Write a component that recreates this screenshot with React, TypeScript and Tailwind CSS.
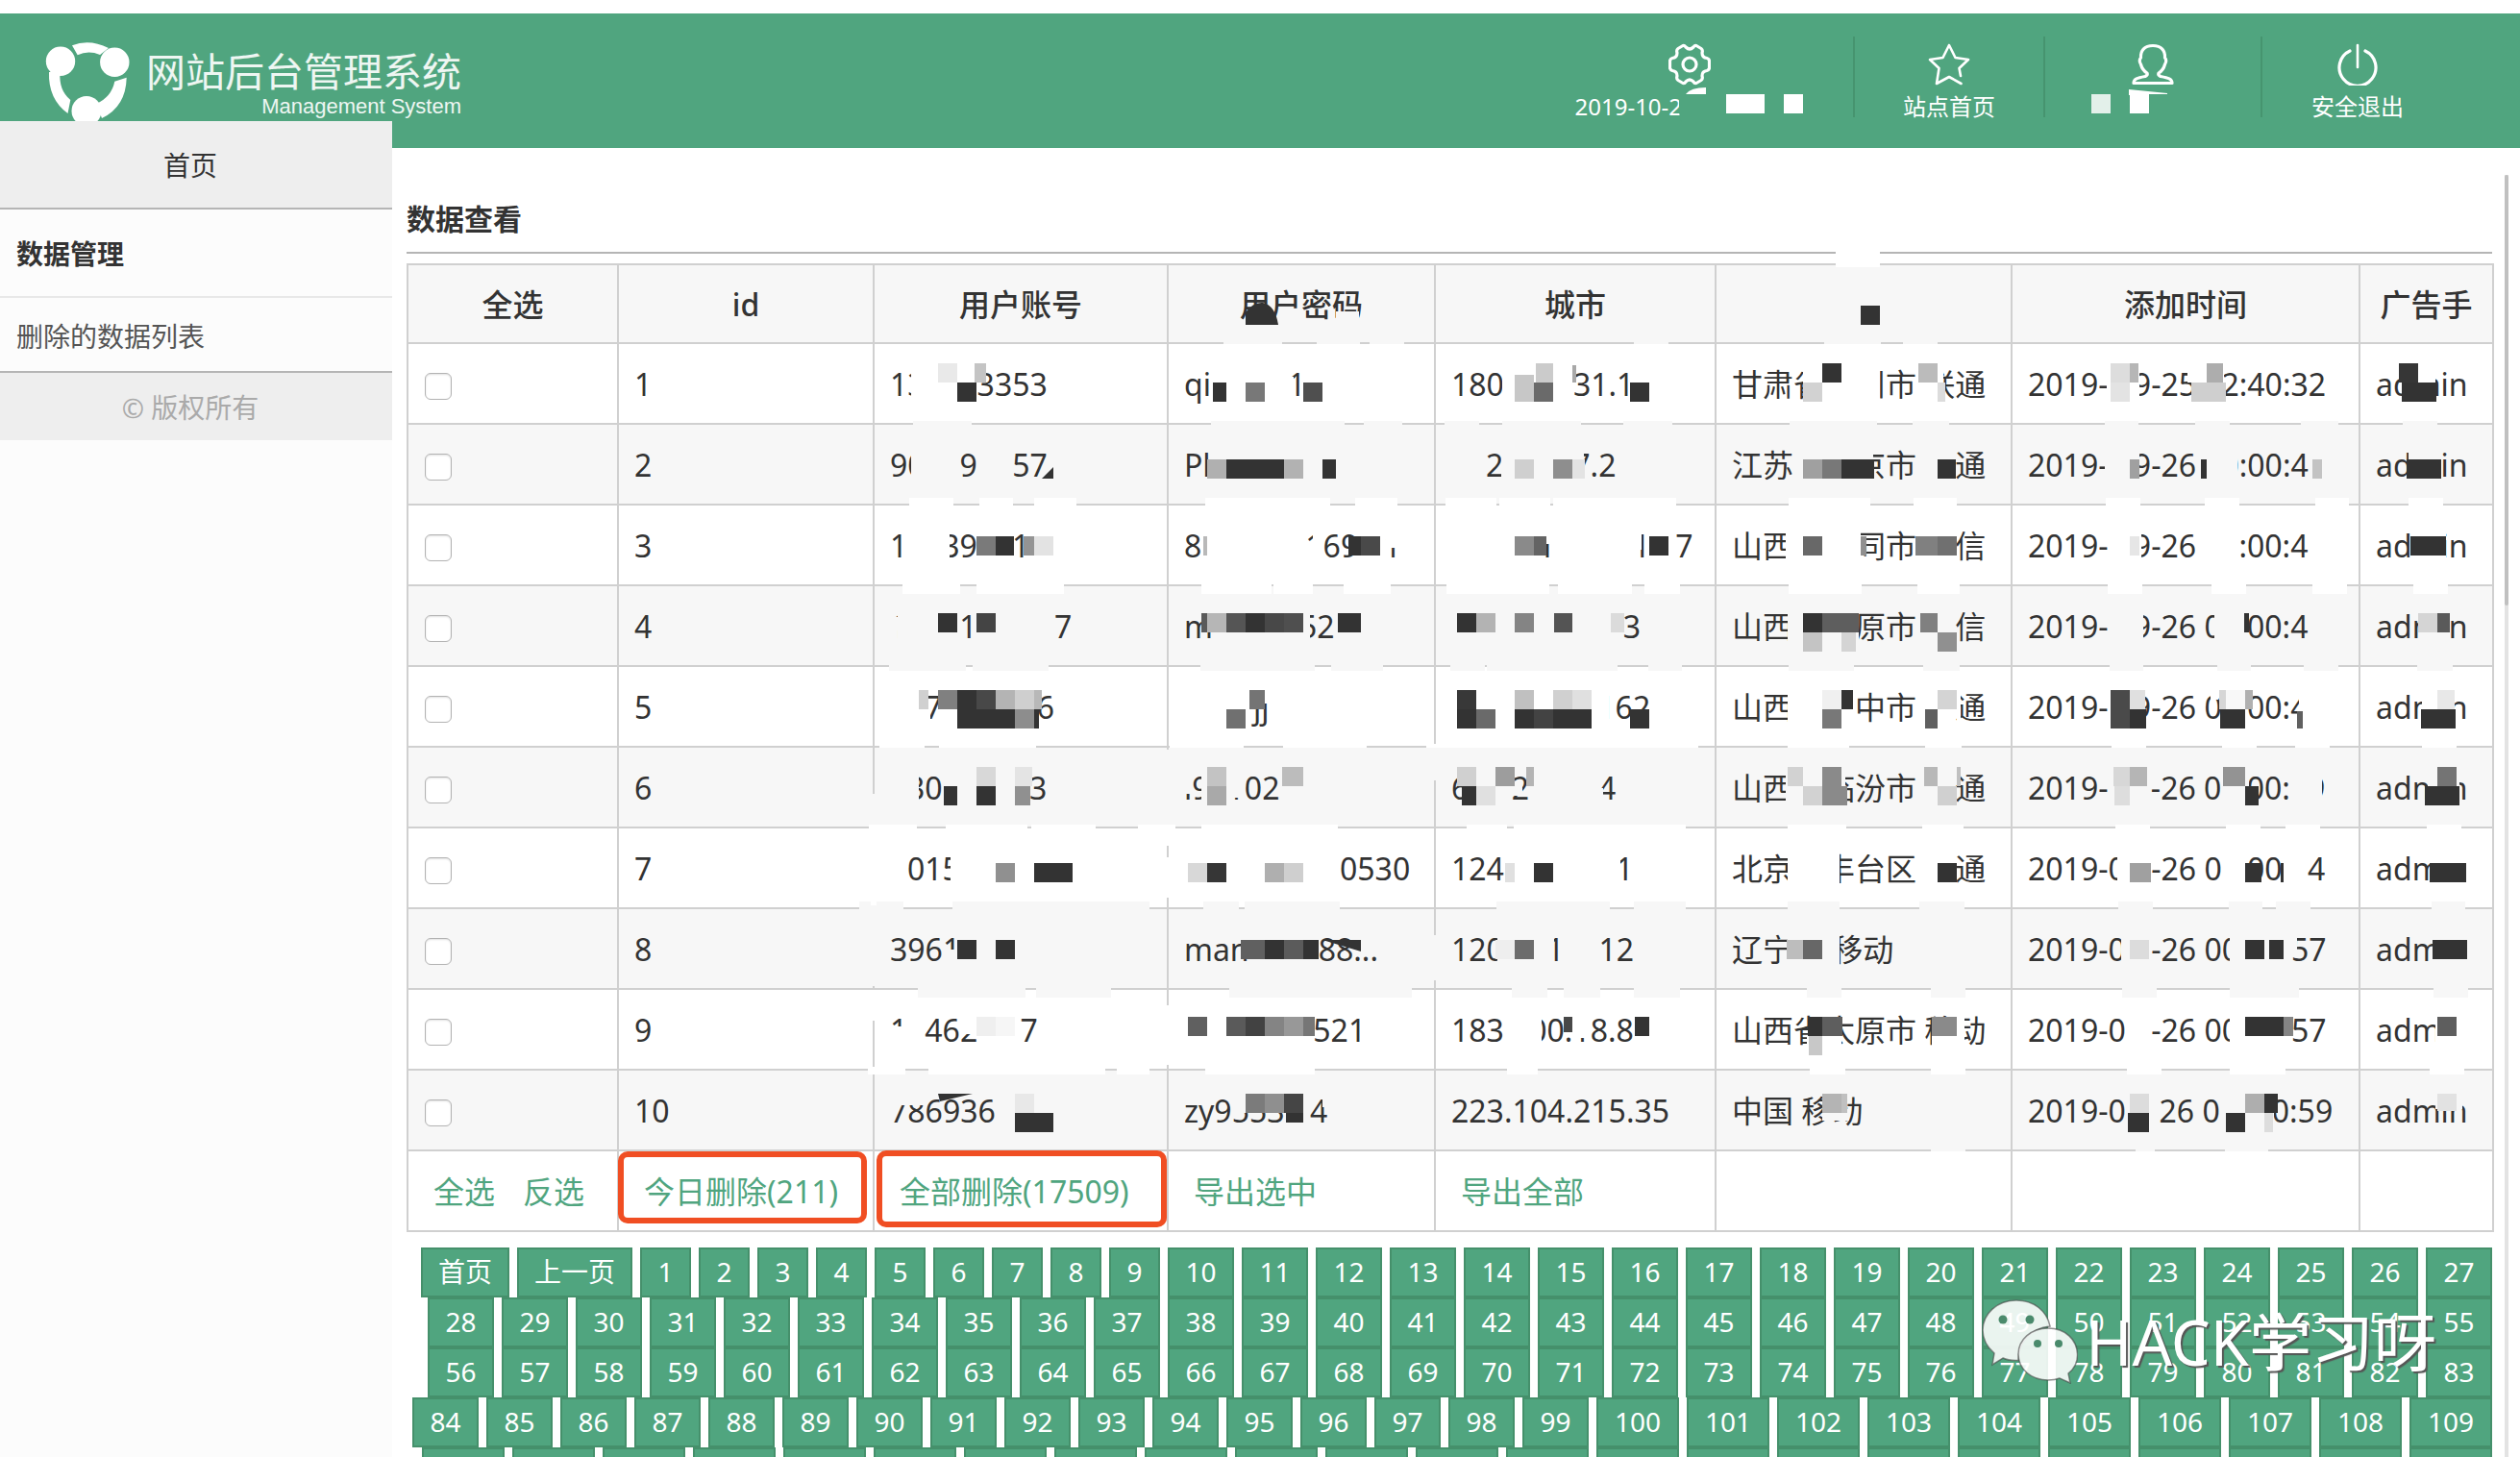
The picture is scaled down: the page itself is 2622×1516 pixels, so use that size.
import React from "react";

type Patch = [x: number, y: number, w: number, h: number, fill: string];

const W = "#ffffff";
const G = "#f7f7f7";
const D = "#333333";

const columns = [
  { title: "全选", width: "w-[219px]" },
  { title: "id", width: "w-[266px]" },
  { title: "用户账号", width: "w-[306px]" },
  { title: "用户密码", width: "w-[278px]" },
  { title: "城市", width: "w-[292px]" },
  { title: "", width: "w-[308px]" },
  { title: "添加时间", width: "w-[362px]" },
  { title: "广告手", width: "w-[139px]" },
];

// "_" stands for one redacted digit.
const rows: string[][] = [
  ["13___3353", "qi____ 1", "180____31.1", "甘肃省　州市 联通", "2019- _9-25 _2:40:32"],
  ["90__9_157", "Pl", "__2____7.2", "江苏　　京市 联通", "2019- _9-26 _0:00:4"],
  ["1__39__1", "8______169_ 1", "_____1____ 1_ 7", "山西　　同市 　信", "2019- _9-26 __:00:4"],
  ["1___1____ 7", "m_____52", "_________  3", "山西　　原市 　信", "2019- _9-26 0_ 00:4"],
  ["__7_____ 6", "____jj", "________ 162", "山西　　中市 　通", "2019- _9-26 0_ 00:4"],
  ["_30____13", "l9_102", "6__ 2____4", "山西　临汾市 　通", "2019- __-26 0_ 00:_9"],
  ["_015", "_________0530", "124______ 1", "北京　丰台区 　通", "2019-0_ -26 0_ 00_ 4"],
  ["3961", "man____88...", "120__ 1__12", "辽宁　 移动", "2019-0_ -26 00___57"],
  ["1_462__ 7", "_______ 521", "183_ 00.18.8", "山西省太原市 移动", "2019-0_ -26 00___57"],
  ["786936", "zy9553_ 4", "223.104.215.35", "中国 移动", "2019-0_  26 0___0:59"],
];

// Horizontal spans [from, to] wiped out of the rule under each row.
const ruleGaps: { y: number; h: number; fill: string; spans: [number, number][] }[] = [
  { y: 354, h: 4, fill: G, spans: [[1273, 1334], [1370, 1415], [1425, 1461], [1700, 1736], [1898, 1957], [1980, 2016]] },
  { y: 438, h: 4, fill: G, spans: [[950, 1011], [1260, 1399], [1419, 1459], [1503, 1539], [1563, 1645], [1689, 1740], [1862, 1953], [1990, 2028], [2190, 2225], [2284, 2320], [2394, 2433], [2500, 2536]] },
  { y: 518, h: 8, fill: W, spans: [[946, 992], [1019, 1054], [1076, 1120], [1254, 1384], [1410, 1454], [1504, 1557], [1560, 1613], [1616, 1744], [1861, 1946], [1991, 2036], [2191, 2227], [2294, 2330], [2409, 2444], [2506, 2542]] },
  { y: 606, h: 12, fill: W, spans: [[939, 999], [1016, 1107], [1250, 1323], [1325, 1366], [1398, 1447], [1505, 1612], [1621, 1698], [1711, 1748], [1861, 1937], [1995, 2039], [2193, 2229], [2301, 2337], [2406, 2442], [2511, 2547]] },
  { y: 690, h: 8, fill: G, spans: [[925, 1005], [1012, 1091], [1249, 1368], [1385, 1439], [1509, 1545], [1547, 1683], [1715, 1750], [1861, 1929], [2001, 2039], [2195, 2230], [2307, 2342], [2397, 2433], [2515, 2552]] },
  { y: 774, h: 4, fill: W, spans: [[915, 962], [977, 1078], [1217, 1294], [1335, 1422], [1484, 1767], [1860, 1924], [2003, 2041], [2197, 2233], [2312, 2348], [2388, 2424], [2520, 2556]] },
  { y: 858, h: 4, fill: W, spans: [[904, 954], [984, 1069], [1073, 1140], [1184, 1223], [1250, 1392], [1526, 1568], [1575, 1754], [1860, 1921], [2000, 2043], [2201, 2237], [2316, 2352], [2378, 2414], [2525, 2561]] },
  { y: 938, h: 8, fill: G, spans: [[894, 940], [991, 1196], [1252, 1289], [1295, 1394], [1557, 1675], [1700, 1754], [1860, 1914], [1997, 2044], [2204, 2240], [2319, 2354], [2368, 2404], [2530, 2565]] },
  { y: 1026, h: 12, fill: G, spans: [[955, 1067], [1078, 1156], [1279, 1469], [1573, 1610], [1627, 1665], [1700, 1748], [1880, 1916], [2009, 2045], [2208, 2244], [2320, 2392], [2532, 2568]] },
  { y: 1110, h: 8, fill: W, spans: [[903, 942], [966, 1150], [1162, 1196], [1254, 1368], [1568, 1600], [1883, 1920], [2009, 2045], [2213, 2249], [2320, 2378], [2528, 2564]] },
  { y: 1196, h: 2, fill: G, spans: [[2009, 2045], [2222, 2242], [2315, 2360]] },
];

const wipes: Patch[] = [
  // column rules
  [1910, 262, 46, 16, W],
  [906, 826, 6, 32, G], [906, 862, 6, 80, W], [906, 946, 6, 80, G], [906, 1030, 6, 32, W],
  [1212, 780, 6, 78, G], [1212, 862, 6, 18, W], [1212, 892, 6, 42, W], [1212, 1046, 6, 62, W],
  [1490, 778, 6, 34, G], [1490, 973, 6, 47, G],
  // header
  [1390, 324, 24, 18, G],
  // account
  [948, 378, 28, 42, W], [948, 460, 34, 44, G], [1034, 460, 19, 44, G],
  [976, 546, 12, 44, W], [927, 642, 14, 14, G], [934, 636, 12, 40, G],
  [956, 734, 12, 30, W], [940, 800, 16, 44, G], [1050, 800, 20, 34, G],
  [989, 880, 12, 50, W], [982, 988, 14, 24, G], [926, 1068, 14, 24, W],
  [998, 1054, 20, 22, W], [926, 1136, 38, 14, G],
  // password
  [1338, 392, 8, 40, W], [1366, 554, 8, 30, W], [1442, 550, 20, 20, W],
  [1349, 634, 14, 44, G], [1302, 716, 20, 16, W], [1232, 800, 7, 26, G], [1250, 800, 7, 44, G], [1276, 800, 16, 30, G],
  [1376, 1136, 10, 16, G], [1282, 1138, 14, 20, G], [1300, 1158, 10, 6, G], [1320, 1158, 10, 4, G], [1353, 1136, 13, 16, G],
  // address
  [1563, 378, 12, 44, W], [1562, 460, 12, 44, G], [1636, 470, 12, 30, G],
  [1598, 546, 16, 20, W], [1700, 546, 8, 26, W], [1676, 660, 12, 22, G],
  [1664, 720, 10, 28, W], [1716, 720, 6, 44, W], [1574, 818, 10, 10, G],
  [1662, 820, 6, 16, G], [1680, 880, 6, 40, W], [1558, 966, 14, 44, G],
  [1610, 970, 7, 30, G], [1590, 1054, 14, 44, W], [1636, 1054, 14, 26, W],
  // region
  [1876, 378, 20, 44, W], [1896, 398, 60, 24, W], [1916, 376, 40, 26, W],
  [1996, 376, 26, 46, W], [1925, 460, 24, 44, G], [1998, 460, 37, 44, G],
  [1858, 546, 16, 44, W], [1928, 546, 8, 44, W], [1860, 630, 16, 44, G], [1928, 658, 6, 20, G],
  [1860, 714, 16, 44, W], [1858, 798, 20, 44, G], [1898, 798, 22, 44, G],
  [1860, 880, 54, 44, W], [1998, 880, 37, 44, W], [2036, 720, 4, 40, W], [1860, 970, 54, 44, G], [1880, 1078, 36, 24, W],
  [2010, 1078, 34, 24, W], [2034, 1056, 10, 44, W], [1896, 1136, 22, 30, G], [1914, 1156, 10, 10, G],
  // time
  [2192, 376, 34, 44, W], [2276, 376, 20, 22, W], [2306, 376, 8, 22, W],
  [2190, 460, 36, 44, G], [2296, 460, 32, 44, G], [2418, 460, 10, 44, G],
  [2196, 546, 32, 44, W], [2196, 630, 34, 44, G], [2304, 630, 30, 44, G], [2416, 630, 10, 44, G],
  [2300, 718, 8, 10, W], [2392, 716, 30, 24, W], [2396, 730, 30, 34, W],
  [2314, 798, 26, 44, G], [2390, 800, 26, 44, G], [2203, 880, 14, 44, W],
  [2318, 880, 18, 44, W], [2207, 966, 12, 44, G], [2320, 966, 16, 44, G], [2384, 966, 6, 30, G],
  [2211, 1050, 12, 44, W], [2320, 1050, 16, 44, W], [2214, 1136, 22, 44, G], [2316, 1136, 50, 44, G],
  // advertiser
  [2514, 376, 20, 22, W], [2500, 398, 34, 22, W],
  [2506, 460, 34, 44, G], [2510, 546, 35, 44, W], [2516, 630, 34, 44, G],
  [2520, 714, 34, 44, W], [2526, 798, 33, 44, G], [2532, 880, 36, 44, W],
  [2533, 966, 38, 44, G], [2534, 1050, 36, 44, W], [2534, 1136, 28, 18, G],
];

const blocks: Patch[] = [
  [1936, 318, 20, 20, D],
  // account
  [976, 378, 20, 20, "#e9e9e9"], [996, 398, 20, 20, D], [1014, 378, 12, 20, "#c4c4c4"],
  [1016, 558, 20, 20, "#7a7a7a"], [1036, 558, 19, 20, D], [1065, 558, 11, 20, "#949494"], [1076, 558, 20, 20, "#e3e3e3"],
  [976, 638, 20, 20, D], [1016, 638, 20, 20, "#444444"],
  [956, 718, 10, 20, "#d0d0d0"], [976, 718, 20, 20, "#808080"], [996, 718, 20, 20, D], [1016, 718, 20, 20, "#484848"],
  [1036, 718, 20, 20, "#b4b4b4"], [1056, 718, 20, 20, "#cfcfcf"], [1076, 718, 8, 20, "#b8b8b8"],
  [996, 738, 60, 20, D], [1056, 738, 20, 20, "#8d8d8d"], [1076, 738, 5, 20, D],
  [982, 818, 14, 20, D], [1016, 798, 20, 20, "#d8d8d8"], [1016, 818, 20, 20, D], [1056, 798, 18, 20, "#e4e4e4"], [1056, 818, 16, 20, "#909090"],
  [1036, 898, 20, 20, "#909090"], [1076, 898, 40, 20, D],
  [996, 978, 20, 20, D], [1036, 978, 20, 20, D],
  [1016, 1058, 20, 20, "#efefef"], [1036, 1058, 20, 20, "#f6f6f6"],
  [1056, 1138, 20, 20, "#e8e8e8"], [1056, 1158, 40, 20, D],
  // password
  [1262, 398, 14, 20, D], [1296, 398, 20, 20, "#787878"], [1356, 398, 20, 20, "#4f4f4f"],
  [1256, 478, 20, 20, "#b0b0b0"], [1276, 478, 60, 20, D], [1336, 478, 20, 20, "#b2b2b2"], [1376, 478, 14, 20, D],
  [1252, 558, 4, 20, "#b9b9b9"], [1403, 558, 13, 20, D], [1416, 558, 20, 20, "#494949"],
  [1250, 638, 6, 20, "#5a5a5a"], [1256, 638, 20, 20, "#b6b6b6"], [1276, 638, 20, 20, "#555555"], [1296, 638, 20, 20, D],
  [1316, 638, 20, 20, "#484848"], [1336, 638, 20, 20, "#4f4f4f"], [1392, 638, 24, 20, D],
  [1300, 718, 16, 20, "#747474"], [1276, 738, 20, 20, "#707070"],
  [1256, 798, 20, 20, "#c3c3c3"], [1256, 818, 20, 20, "#a9a9a9"], [1334, 798, 22, 20, "#bcbcbc"],
  [1236, 898, 20, 20, "#d8d8d8"], [1256, 898, 20, 20, "#363636"], [1316, 898, 20, 20, "#afafaf"], [1336, 898, 20, 20, "#cfcfcf"],
  [1291, 978, 25, 20, "#606060"], [1316, 978, 20, 20, D], [1336, 978, 20, 20, "#5b5b5b"], [1356, 978, 16, 20, D],
  [1236, 1058, 20, 20, "#606060"], [1276, 1058, 20, 20, "#5a5a5a"], [1296, 1058, 20, 20, "#424242"], [1316, 1058, 20, 20, "#848484"],
  [1336, 1058, 20, 20, "#989898"], [1356, 1058, 12, 20, "#767676"],
  [1296, 1138, 20, 20, "#7b7b7b"], [1316, 1138, 20, 20, "#8f8f8f"], [1336, 1138, 20, 20, "#454545"], [1338, 1158, 18, 10, D],
  // address
  [1576, 390, 20, 28, "#c7c7c7"], [1598, 378, 18, 20, "#cbcbcb"], [1596, 398, 20, 20, "#6a6a6a"], [1636, 380, 4, 18, "#a8a8a8"], [1696, 398, 20, 20, D],
  [1576, 478, 20, 20, "#cfcfcf"], [1616, 478, 20, 20, "#8e8e8e"], [1636, 478, 13, 20, "#e3e3e3"],
  [1576, 558, 20, 20, "#8a8a8a"], [1596, 558, 13, 20, "#646464"], [1716, 558, 20, 20, D],
  [1516, 638, 20, 20, D], [1536, 638, 20, 20, "#b3b3b3"], [1576, 638, 20, 20, "#848484"], [1617, 638, 19, 20, "#545454"], [1676, 638, 14, 20, "#dbdbdb"],
  [1516, 718, 20, 20, "#383838"], [1576, 718, 20, 20, "#c0c0c0"], [1616, 718, 20, 20, "#d0d0d0"], [1636, 718, 20, 20, "#e0e0e0"],
  [1516, 738, 20, 20, D], [1536, 738, 20, 20, "#6a6a6a"], [1576, 738, 20, 20, D], [1596, 738, 20, 20, "#434343"], [1616, 738, 40, 20, D], [1696, 738, 20, 20, D],
  [1516, 798, 20, 20, "#d0d0d0"], [1521, 818, 15, 20, D], [1536, 818, 20, 20, "#e0e0e0"], [1556, 798, 20, 20, "#9d9d9d"], [1588, 798, 8, 20, "#b4b4b4"],
  [1566, 898, 10, 20, "#e0e0e0"], [1596, 898, 20, 20, D],
  [1556, 978, 20, 20, "#eeeeee"], [1576, 978, 20, 20, "#6c6c6c"],
  [1627, 1058, 9, 16, "#484848"], [1701, 1058, 15, 20, D],
  // region
  [1896, 378, 20, 20, D], [1876, 398, 20, 20, "#d2d2d2"], [1996, 378, 20, 20, "#bbbbbb"], [2016, 398, 8, 20, "#dcdcdc"],
  [1876, 478, 20, 20, "#a0a0a0"], [1896, 478, 20, 20, "#787878"], [1916, 478, 34, 20, D], [2016, 478, 19, 20, D],
  [1876, 558, 20, 20, "#686868"], [1936, 558, 6, 20, "#909090"], [1993, 558, 23, 20, "#808080"], [2016, 558, 20, 20, "#707070"],
  [1876, 638, 20, 20, D], [1896, 638, 38, 20, "#5e5e5e"], [1876, 658, 20, 20, "#c4c4c4"], [1916, 658, 15, 20, "#d4d4d4"],
  [1998, 638, 18, 20, "#808080"], [2016, 658, 20, 20, "#909090"],
  [1896, 718, 20, 20, "#f0f0f0"], [1916, 718, 12, 20, D], [1896, 738, 20, 20, "#787878"], [2016, 718, 20, 20, "#d4d4d4"], [2003, 738, 13, 20, "#606060"],
  [1860, 798, 16, 20, "#d2d2d2"], [1876, 818, 20, 20, "#d2d2d2"], [1896, 798, 20, 40, "#8a8a8a"], [1916, 818, 6, 20, "#8a8a8a"],
  [2002, 798, 14, 20, "#b8b8b8"], [2016, 818, 20, 20, "#d0d0d0"], [2036, 798, 4, 20, "#c0c0c0"],
  [2016, 898, 20, 20, D],
  [1859, 978, 17, 20, "#bdbdbd"], [1876, 978, 20, 20, "#676767"],
  [1881, 1058, 15, 20, D], [1896, 1058, 21, 20, "#5e5e5e"], [1882, 1078, 14, 20, "#c8c8c8"], [2010, 1058, 26, 20, "#8a8a8a"],
  [1896, 1138, 20, 20, "#b4b4b4"], [1916, 1138, 6, 20, "#c0c0c0"],
  // time
  [2196, 378, 20, 20, "#dddddd"], [2216, 378, 9, 20, "#b6b6b6"], [2196, 398, 20, 20, "#e3e3e3"], [2296, 378, 17, 20, "#adadad"], [2280, 398, 36, 20, "#cfcfcf"],
  [2216, 478, 10, 20, "#a0a0a0"], [2290, 478, 6, 20, D], [2406, 478, 10, 20, "#c3c3c3"],
  [2216, 558, 10, 20, "#e6e6e6"], [2335, 638, 5, 20, D],
  [2196, 718, 20, 40, "#4a4a4a"], [2216, 718, 16, 20, "#e0e0e0"], [2216, 738, 17, 20, D],
  [2309, 718, 7, 20, "#d6d6d6"], [2316, 718, 20, 20, "#f8f8f8"], [2336, 718, 8, 20, "#b0b0b0"], [2310, 738, 26, 20, D], [2390, 740, 6, 18, "#606060"],
  [2199, 798, 17, 20, "#d7d7d7"], [2216, 798, 18, 20, "#b5b5b5"], [2200, 818, 16, 20, "#dddddd"], [2313, 798, 23, 20, "#939393"], [2336, 818, 14, 20, D],
  [2216, 898, 22, 20, "#a0a0a0"], [2336, 898, 17, 20, D], [2373, 898, 3, 20, D],
  [2216, 978, 20, 20, "#dcdcdc"], [2336, 978, 20, 20, D], [2361, 978, 15, 20, D],
  [2336, 1058, 40, 20, D], [2376, 1058, 10, 20, "#848484"],
  [2216, 1138, 20, 20, "#dcdcdc"], [2214, 1158, 22, 20, D], [2336, 1138, 20, 20, "#aeaeae"], [2356, 1138, 14, 20, D], [2316, 1158, 20, 20, D], [2356, 1158, 9, 20, "#dddddd"],
  // advertiser
  [2496, 378, 20, 20, "#363636"], [2499, 398, 36, 20, D], [2504, 478, 36, 20, D], [2508, 558, 37, 20, D],
  [2516, 638, 20, 20, "#d5d5d5"], [2536, 638, 13, 20, "#5a5a5a"], [2536, 718, 18, 20, "#e8e8e8"], [2519, 738, 36, 20, D],
  [2536, 798, 20, 20, "#747474"], [2523, 818, 36, 20, D], [2528, 898, 38, 20, D], [2531, 978, 36, 20, D],
  [2536, 1058, 20, 20, "#5e5e5e"], [2536, 1138, 20, 18, "#e2e2e2"],
];

function Rects({ items }: { items: Patch[] }) {
  return (
    <>
      {items.map(([x, y, w, h, fill], i) => (
        <rect key={i} x={x} y={y} width={w} height={h} fill={fill} />
      ))}
    </>
  );
}

function Mosaic() {
  return (
    <svg
      aria-hidden="true"
      className="pointer-events-none absolute inset-0 h-full w-full overflow-visible"
      viewBox="423 274 2170 1008"
      preserveAspectRatio="none"
      shapeRendering="crispEdges"
    >
      {ruleGaps.map((g) => (
        <Rects key={g.y} items={g.spans.map(([a, b]): Patch => [a, g.y, b - a, g.h, g.fill])} />
      ))}
      <Rects items={wipes} />
      <Rects items={blocks} />
      <g fill={D} shapeRendering="auto">
        <path d="M1296 338V325Q1304 314 1314 315Q1327 318 1330 338Z" />
        <path d="M1084 498L1096 486V498Z" />
        <path d="M976 1138H1012L978 1146Z" />
        <path d="M1376 978H1416V990Z" />
      </g>
    </svg>
  );
}

function Redacted({ text }: { text: string }) {
  return (
    <span className="whitespace-pre">
      {text.split(/(_)/).map((part, i) =>
        part === "_" ? <span key={i} className="inline-block w-[18px]" /> : <React.Fragment key={i}>{part}</React.Fragment>
      )}
    </span>
  );
}

function Logo() {
  return (
    <svg viewBox="0 0 90 90" className="h-[90px] w-[90px] shrink-0" fill="#fff" aria-hidden="true">
      <circle cx="17" cy="22.700" r="15.200" />
      <circle cx="73.300" cy="23.700" r="15.200" />
      <circle cx="44" cy="74.500" r="15.500" />
      <path d="M29 6.300Q47 -1 67 9L58 16Q46 11 34.700 16.300Z" />
      <path d="M5 34Q4 62 24.500 77L27.300 63Q15 53 16.500 34Z" />
      <path d="M85.700 39.700Q85 70 60 82L54 67Q70 60 73.300 43.700Z" />
    </svg>
  );
}

const iconProps = {
  viewBox: "0 0 44 44",
  className: "h-11 w-11 shrink-0",
  fill: "none",
  stroke: "#fff",
  strokeWidth: 2.6,
  strokeLinejoin: "round" as const,
  strokeLinecap: "round" as const,
  "aria-hidden": true,
};

const GearIcon = () => (
  <svg {...iconProps} strokeWidth={3.2}>
    <path d="M15 2.500Q17 2 18 4Q22 8 26 4Q27 2 29 2.500L34 5.500Q36 7 35 10Q35 15 40 15.500Q42 16 42.500 18V26Q42 28 40 28.500Q35 29 35 34Q36 37 34 38.500L29 41.500Q27 42 26 40Q22 36 18 40Q17 42 15 41.500L10 38.500Q8 37 9 34Q9 29 4 28.500Q2 28 1.500 26V18Q2 16 4 15.500Q9 15 9 10Q8 7 10 5.500Z" />
    <circle cx="22" cy="22" r="7" />
  </svg>
);

const StarIcon = () => (
  <svg {...iconProps}>
    <path d="M34 34L32.500 26L42 17L28.500 15L22 2L15.500 15L2 17L11.500 26L9 42L22 35L34.500 42" />
  </svg>
);

const UserIcon = () => (
  <svg {...iconProps} strokeWidth={3.2}>
    <path d="M22 2.500C13 2.500 9 8 9.500 15Q7 18 9.500 22Q11 28 16 31Q17 33 14 34.500C6 36 2 37 2 41.500H42C42 37 38 36 30 34.500Q27 33 28 31Q33 28 34.500 22Q37 18 34.500 15C35 8 31 2.500 22 2.500Z" />
  </svg>
);

const PowerIcon = () => (
  <svg {...iconProps}>
    <path d="M22 2V25" />
    <path d="M14 8A19 19 0 1 0 30 8" strokeWidth={3.2} />
  </svg>
);

function HeaderItem({ icon, children, className }: { icon: React.ReactNode; children: React.ReactNode; className: string }) {
  return (
    <a href="#" className={`relative flex h-[84px] flex-col items-center pt-[7px] text-2xl leading-8 text-white ${className}`}>
      {icon}
      <span className="mt-1.5 flex h-8 shrink-0 items-center">{children}</span>
    </a>
  );
}

function WechatIcon() {
  return (
    <svg viewBox="0 0 100 88" className="h-[88px] w-[100px] shrink-0" aria-hidden="true">
      <g stroke="#444" strokeOpacity="0.6" strokeWidth="1.500" fill="#fff" fillOpacity="0.88">
        <path d="M36 1C16 1 1 15 1 32C1 42 6 50 13 56L11 68L22 61Q28 64 38 63.500C38 46 50 30 71 28C68 12 54 1 36 1Z" />
        <path d="M69 30C51 30 38 42 38 57C38 73 52 84 69 84Q76 84 81 82L92 87L90 77Q100 69 99.500 57C99 42 87 30 69 30Z" />
      </g>
      <g fill="#4a8a6c">
        <circle cx="22" cy="21" r="4.500" />
        <circle cx="50" cy="21" r="4.500" />
        <circle cx="58" cy="46" r="4" />
        <circle cx="80" cy="46" r="4" />
      </g>
    </svg>
  );
}

const pages = Array.from({ length: 132 }, (_, i) => i + 1);

function PageButton({ children, className }: { children: React.ReactNode; className: string }) {
  return (
    <button type="button" className={`flex h-[52px] justify-center border-2 border-[#45906b] bg-[#50a57f] text-[28px] leading-[46px] text-white ${className}`}>
      {children}
    </button>
  );
}

export default function App() {
  return (
    <div className="flex h-screen flex-col overflow-hidden bg-white pt-3.5 font-['Noto_Sans','Noto_Sans_CJK_SC',sans-serif] text-[#333]">
      <header className="flex h-[140px] shrink-0 justify-between bg-[#50a57f]">
        <div className="flex pl-[46px] pt-[27px] text-white/90">
          <Logo />
          <div className="ml-4 flex flex-col items-end">
            <div className="mt-2 text-[41px] leading-[50px]">网站后台管理系统</div>
            <div className="font-['Liberation_Sans',sans-serif] text-[22px] leading-6">Management System</div>
          </div>
        </div>
        <nav className="flex pr-[70px] pt-6">
          <HeaderItem icon={<GearIcon />} className="w-[341px]">
            <span className="flex w-[238px] items-center">
              2019-10-2
              <span className="mb-1.5 ml-[46px] h-5 w-10 bg-white" />
              <span className="mb-1.5 ml-5 h-5 w-5 bg-white" />
            </span>
            <svg aria-hidden="true" viewBox="0 0 30 40" className="absolute left-[160px] top-[50px] h-10 w-[30px]">
              <path d="M0 14Q-2 28 3 40H14V14Z" fill="#50a57f" />
              <path d="M7 10Q12 3 28 3V10Z" fill="#fff" />
            </svg>
          </HeaderItem>
          <HeaderItem icon={<StarIcon />} className="w-[198px] border-l-2 border-[#46946f]">站点首页</HeaderItem>
          <HeaderItem icon={<UserIcon />} className="w-[226px] border-l-2 border-[#46946f]">
            <span className="mb-1.5 flex w-[128px]">
              <span className="h-5 w-5 bg-[#e3f0ea]" />
              <span className="ml-5 h-5 w-5 bg-white" />
            </span>
            <svg aria-hidden="true" viewBox="0 0 40 6" className="absolute left-[87px] top-[55px] h-1.5 w-10">
              <path d="M0 0L40 4V5H20V6H0Z" fill="#fff" />
            </svg>
          </HeaderItem>
          <HeaderItem icon={<PowerIcon />} className="w-[200px] border-l-2 border-[#46946f]">安全退出</HeaderItem>
        </nav>
      </header>

      <div className="flex min-h-0 flex-1">
        <aside className="relative -mt-7 w-[408px] shrink-0 bg-[#fcfcfc] text-[28px]">
          <a href="#" className="block h-[92px] border-b-2 border-[#b5b5b5] bg-[#eee] pr-3 text-center leading-[92px]">首页</a>
          <h2 className="h-[92px] border-b-2 border-[#e8e8e8] pl-[17px] font-bold leading-[92px]">数据管理</h2>
          <a href="#" className="block h-[78px] border-b-2 border-[#b5b5b5] pl-[17px] leading-[80px] text-[#555]">删除的数据列表</a>
          <footer className="h-[70px] bg-[#eee] pr-3 text-center leading-[72px] text-[#aaa]">© 版权所有</footer>
        </aside>

        <main className="ml-[15px] min-w-0 flex-1 pt-[46px]">
          <h1 className="mb-2.5 h-16 border-b-2 border-[#b5b5b5] text-[30px] font-bold leading-[56px]">数据查看</h1>
          <div className="relative">
            <table className="w-full table-fixed border-collapse border-2 border-[#d0d0d0] text-[32px] leading-[44px]">
              <thead>
                <tr className="h-[82px] bg-[#f7f7f7]">
                  {columns.map((c) => (
                    <th key={c.title} className={`border-2 border-[#d0d0d0] p-0 pt-0.5 font-medium ${c.width}`}>{c.title}</th>
                  ))}
                </tr>
              </thead>
              <tbody>
                {rows.map((cells, i) => (
                  <tr key={i} className="h-[84px] even:bg-[#f7f7f7]">
                    <td className="border-2 border-[#d0d0d0] py-0 pl-[17px] pt-1.5">
                      <input
                        type="checkbox"
                        aria-label={`选择 ${i + 1}`}
                        className="block h-7 w-7 appearance-none rounded-md border border-[#b3b3b3] bg-white shadow-[inset_0_1px_2px_rgba(0,0,0,0.12)]"
                      />
                    </td>
                    <td className="border-2 border-[#d0d0d0] pb-0 pl-4 pt-0.5">{i + 1}</td>
                    {cells.map((text, j) => (
                      <td key={j} className="border-2 border-[#d0d0d0] pb-0 pl-4 pt-0.5"><Redacted text={text} /></td>
                    ))}
                    <td className="border-2 border-[#d0d0d0] pb-0 pl-4 pt-0.5">admin</td>
                  </tr>
                ))}
                <tr className="h-[84px] text-[#50a57f]">
                  <td className="border-2 border-[#d0d0d0] pb-0 pl-[26px] pt-0.5">
                    <div className="flex gap-[29px]">
                      <a href="#">全选</a>
                      <a href="#">反选</a>
                    </div>
                  </td>
                  <td className="relative border-2 border-[#d0d0d0] pb-0 pl-[26px] pt-0.5">
                    <a href="#">今日删除(211)</a>
                    <span className="absolute -left-px right-1.5 top-0 h-[75px] rounded-[10px] border-[6px] border-[#f04e23]" />
                  </td>
                  <td className="relative border-2 border-[#d0d0d0] pb-0 pl-[26px] pt-0.5">
                    <a href="#">全部删除(17509)</a>
                    <span className="absolute -top-px left-0.5 right-0 h-20 rounded-[10px] border-[6px] border-[#f04e23]" />
                  </td>
                  <td className="border-2 border-[#d0d0d0] pb-0 pl-[26px] pt-0.5"><a href="#">导出选中</a></td>
                  <td className="border-2 border-[#d0d0d0] pb-0 pl-[26px] pt-0.5"><a href="#">导出全部</a></td>
                  <td className="border-2 border-[#d0d0d0]" />
                  <td className="border-2 border-[#d0d0d0]" />
                  <td className="border-2 border-[#d0d0d0]" />
                </tr>
              </tbody>
            </table>
            <Mosaic />
          </div>

          <nav aria-label="分页" className="relative mt-4 flex flex-wrap justify-end gap-x-2">
            <PageButton className="w-[92px]">首页</PageButton>
            <PageButton className="w-[120px]">上一页</PageButton>
            {pages.map((n) => (
              <PageButton key={n} className={n < 10 ? "w-[53px]" : n < 100 ? "w-[69px]" : "w-[86px]"}>{n}</PageButton>
            ))}
            <div className="pointer-events-none absolute right-[58px] top-[54px] flex items-center gap-2">
              <WechatIcon />
              <span className="text-[65px] leading-[88px] text-white [text-shadow:2px_2px_1px_#555]">HACK学习呀</span>
            </div>
          </nav>
        </main>

        <div className="ml-[13px] mr-3 mt-7 w-1 shrink-0 bg-[#e3e3e3]">
          <div className="h-[33.6%] rounded-full bg-[#c0c0c0]" />
        </div>
      </div>
    </div>
  );
}
